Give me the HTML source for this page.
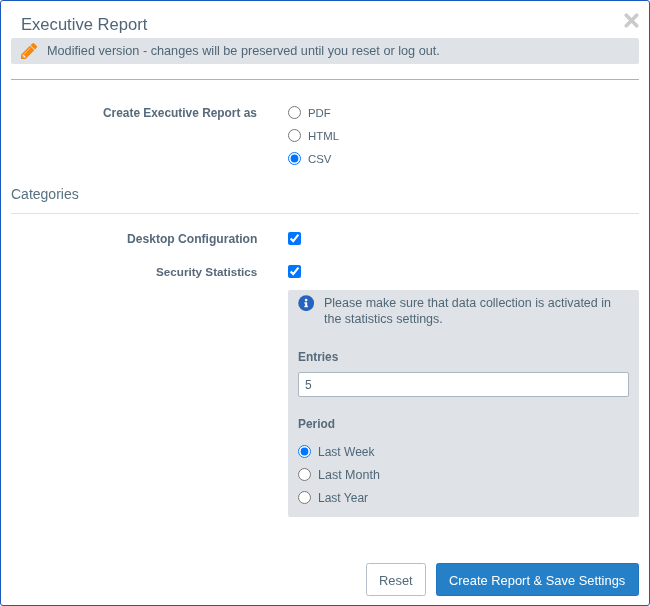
<!DOCTYPE html>
<html><head><meta charset="utf-8">
<style>
html,body{margin:0;padding:0;width:650px;height:606px;overflow:hidden;background:#fff;}
body{font-family:"Liberation Sans",sans-serif;color:#4e5f70;position:relative;-webkit-font-smoothing:antialiased;}
.dlg{position:absolute;left:0;top:0;width:650px;height:606px;box-sizing:border-box;border:1px solid #1b58bb;border-radius:3px;background:#fff;}
.a{position:absolute;white-space:nowrap;line-height:1;will-change:transform;}
.title{left:21px;top:17px;font-size:16.6px;color:#4e6578;}
.close{position:absolute;left:624.3px;top:13.2px;width:15px;height:15px;}
.banner{position:absolute;left:11px;top:38px;width:628px;height:26px;background:#dfe3e7;border-radius:2px;}
.bantext{left:47px;top:45px;font-size:12.7px;color:#4f6677;}
.rule1{position:absolute;left:11px;top:79px;width:628px;height:1px;background:#a9b3bd;}
.lbl{font-weight:bold;font-size:11.9px;color:#566a7b;text-align:right;}
.cat{left:11px;top:187.3px;font-size:14px;color:#587080;}
.rule2{position:absolute;left:11px;top:213px;width:628px;height:1px;background:#dde2e7;}
input{position:absolute;margin:0;width:13px;height:13px;}
.opt{font-size:12px;color:#4f6677;}
.info{position:absolute;left:288px;top:290px;width:351px;height:227px;background:#dfe3e7;border-radius:2px;}
.input{position:absolute;left:298px;top:372px;width:331px;height:25px;box-sizing:border-box;border:1px solid #aab6c2;background:#fff;border-radius:2px;}
.btn{position:absolute;top:563px;height:33px;box-sizing:border-box;border-radius:2.5px;}
.reset{left:366px;width:60px;border:1px solid #b3c0cc;background:#fff;}
.create{left:436px;width:203px;background:#2580c8;border:1px solid #1f74bd;}
</style></head><body>
<div class="dlg"></div>
<div class="a title">Executive Report</div>
<svg class="close" viewBox="0 0 15 15"><path d="M2.3 2.3L12.7 12.7M12.7 2.3L2.3 12.7" stroke="#cbcbcb" stroke-width="3.7" stroke-linecap="round"/></svg>
<div class="banner"></div>
<svg style="position:absolute;left:20.8px;top:43px" width="16.2" height="16.2" viewBox="128 149 1515 1515"><path fill="#f5890f" d="M491 1536l91-91-235-235-91 91v107h128v128h107zm523-928q0-22-22-22-10 0-17 7l-542 542q-7 7-7 17 0 22 22 22 10 0 17-7l542-542q7-7 7-17zm-54-192l416 416-832 832h-416v-416zm683 96q0 53-37 90l-166 166-416-416 166-165q36-38 90-38 53 0 91 38l235 234q37 39 37 91z"/></svg>
<div class="a bantext">Modified version - changes will be preserved until you reset or log out.</div>
<div class="rule1"></div>

<div class="a lbl" style="right:393px;top:107.5px;">Create Executive Report as</div>
<input type="radio" name="f" style="left:288px;top:106px">
<div class="a opt" style="left:308px;top:107.5px;font-size:11.4px">PDF</div>
<input type="radio" name="f" style="left:288px;top:129px">
<div class="a opt" style="left:308px;top:130.5px;font-size:11.4px">HTML</div>
<input type="radio" name="f" checked style="left:288px;top:152px">
<div class="a opt" style="left:308px;top:153.5px;font-size:11.4px">CSV</div>

<div class="a cat">Categories</div>
<div class="rule2"></div>

<div class="a lbl" style="right:393px;top:233px;font-size:12.1px">Desktop Configuration</div>
<input type="checkbox" checked style="left:288px;top:232px">
<div class="a lbl" style="right:393px;top:266px;font-size:11.7px">Security Statistics</div>
<input type="checkbox" checked style="left:288px;top:265px">

<div class="info"></div>
<svg style="position:absolute;left:297.75px;top:294.75px" width="16.3" height="16.3" viewBox="0 0 512 512"><circle cx="256" cy="256" r="248" fill="#2563be"/><path fill="#fff" d="M256 118c23.196 0 42 18.804 42 42s-18.804 42-42 42-42-18.804-42-42 18.804-42 42-42zm56 254c0 6.627-5.373 12-12 12h-88c-6.627 0-12-5.373-12-12v-24c0-6.627 5.373-12 12-12h12v-64h-12c-6.627 0-12-5.373-12-12v-24c0-6.627 5.373-12 12-12h64c6.627 0 12 5.373 12 12v100h12c6.627 0 12 5.373 12 12v24z"/></svg>
<div class="a opt" style="left:324px;top:297px;font-size:12.5px">Please make sure that data collection is activated in</div>
<div class="a opt" style="left:324px;top:313px;font-size:12.5px">the statistics settings.</div>
<div class="a lbl" style="left:298px;top:352px;text-align:left">Entries</div>
<div class="input"></div>
<div class="a opt" style="left:305px;top:379px">5</div>
<div class="a lbl" style="left:298px;top:419px;text-align:left">Period</div>
<input type="radio" name="p" checked style="left:298px;top:445px">
<div class="a opt" style="left:318px;top:446px">Last Week</div>
<input type="radio" name="p" style="left:298px;top:468px">
<div class="a opt" style="left:318px;top:469px;font-size:12.5px">Last Month</div>
<input type="radio" name="p" style="left:298px;top:491px">
<div class="a opt" style="left:318px;top:492px">Last Year</div>

<div class="btn reset"></div>
<div class="a" style="left:379px;top:575px;font-size:12.9px;color:#526a7a">Reset</div>
<div class="btn create"></div>
<div class="a" style="left:449px;top:575px;font-size:12.9px;color:#fff">Create Report &amp; Save Settings</div>
</body></html>
